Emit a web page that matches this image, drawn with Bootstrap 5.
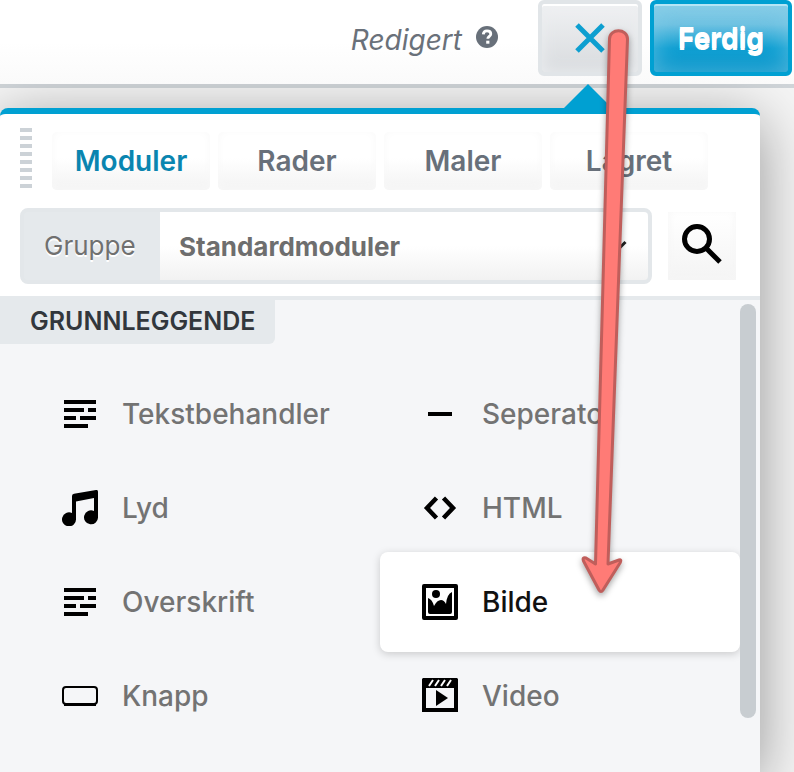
<!DOCTYPE html>
<html lang="nb">
<head>
<meta charset="utf-8">
<meta name="viewport" content="width=device-width, initial-scale=1">
<title>Moduler</title>
<link href="https://cdn.jsdelivr.net/npm/bootstrap@5.3.0/dist/css/bootstrap.min.css" rel="stylesheet">
<style>
  body { font-family: Inter, "Liberation Sans", sans-serif; font-size: 28px; line-height: 36px; color: #6a717a; background: #f5f5f5; }
  .topbar { height: 88px; padding-right: 2px; border-bottom: 4px solid #d0d5d9; background: linear-gradient(#fff 50%, #fafafa); }
  .state { font-size: 28px; margin-right: 14px; }
  .help { margin: 0 40px 6px 0; line-height: 0; }
  .tool { height: 76px; border: 4px solid #e1e5e8; border-radius: 6px; }
  .status { height: 80px; }
  .close-btn { width: 104px; background: linear-gradient(#f0f1f3, #d8dbde); box-shadow: inset 0 2px 0 #fff, inset 0 0 16px #eceef0; }
  .done { width: 142px; border-color: #00a0d2; color: #fff; font-weight: 700; font-size: 28px; background: linear-gradient(#86cce6, #6fc2e2 30%, #0f9fd2 65%, #0091c8); box-shadow: inset 0 2px 0 #b5e5f5, inset 0 0 24px rgba(140,210,235,.6); text-shadow: 0 2px 0 #fff; }
  .stage { padding: 20px 34px 0 0; clip-path: inset(-4px 0 0 0); }
  .panel { border-top: 6px solid #00a0d2; border-radius: 8px 8px 0 0; background: #f5f6f8; box-shadow: 0 12px 60px rgba(0,0,0,.4); }
  .pointer { position: absolute; top: -30px; right: 148px; border: 24px solid transparent; border-top: 0; border-bottom-color: #00a0d2; }
  .head { padding: 14px 20px 12px; border-bottom: 4px solid #e5e9ec; background: #fff; border-radius: 6px 6px 0 0; }
  .tabs { padding-right: 32px; }
  .grip { width: 12px; height: 60px; margin-right: 12px; background: repeating-linear-gradient(#ccd2d7 0 4px, transparent 4px 8px); }
  .tab-btn { flex: 1 1 0; height: 58px; border: 0; border-radius: 5px; font-size: 28px; font-weight: 600; color: #68707a; background: linear-gradient(#fff 45%, #f3f3f3); box-shadow: inset 0 -2px 10px #f8f8f8; }
  .tab-btn.current { color: #0a85b0; }
  .group-row { margin: 18px 4px 0 0; gap: 16px; }
  .group-box { height: 76px; border: 4px solid #e3e7ea; border-radius: 8px; background: #e5e9ec; }
  .group-label { width: 136px; padding-left: 20px; font-size: 26px; font-weight: 400; color: #707070; text-shadow: 0 2px 0 #fff; }
  .group-pick { flex: 1 1 0; min-width: 0; height: 68px; padding: 0 48px 0 19px; border: 0; border-radius: 0 4px 4px 0; font-size: 26px; font-weight: 700; color: #6e6e6e; background-color: #fff; background-image: url("data:image/svg+xml,%3Csvg xmlns='http://www.w3.org/2000/svg' viewBox='0 0 18 12'%3E%3Cpath d='M1.500 2L9 9.500 16.500 2' fill='none' stroke='%23222' stroke-width='3'/%3E%3C/svg%3E"), linear-gradient(#fff 50%, #f2f2f2); background-position: right 21px center, 0 0; background-size: 18px 12px, 100% 100%; }
  .find { width: 68px; height: 68px; border: 0; color: #000; background: linear-gradient(#fff, #f4f4f4); box-shadow: inset 0 -2px 10px #f6f6f6; line-height: 0; }
  .find svg { margin-bottom: 4px; }
  .list { min-height: 472px; }
  .section-name { display: inline-block; margin: -4px 0 0; padding: 7px 20px 5px 30px; font-size: 25px; line-height: 36px; font-weight: 600; color: #32373c; background: #e5e9ec; border-radius: 0 0 6px 0; }
  .modules { margin: 20px 20px 0; padding: 3px 0; }
  .module { height: 100px; margin: -3px 0; padding: 0 0 0 42px; gap: 24px; border: 0; border-radius: 8px; font-size: 28px; font-weight: 500; color: #737373; background: none; }
  .module svg { flex: none; color: #000; }
  .module.chosen { color: #111; background: #fff; box-shadow: 0 2px 8px rgba(0,0,0,.18); }
  .scroll-thumb { position: absolute; top: 4px; right: 4px; width: 16px; height: 414px; border-radius: 8px; background: #c8cdd1; }
  .arrow { position: absolute; top: 26px; right: 158px; pointer-events: none; filter: drop-shadow(0 3px 3px rgba(0,0,0,.35)); }
</style>
<script src="https://cdn.jsdelivr.net/npm/bootstrap@5.3.0/dist/js/bootstrap.bundle.min.js" defer></script>
</head>
<body class="position-relative">
<header class="topbar d-flex justify-content-end align-items-start">
  <div class="d-flex align-items-center status">
    <em class="state">Redigert</em>
    <a href="#" class="help" aria-label="Hjelp"><svg width="22" height="22" viewBox="0 0 22 22"><circle cx="11" cy="11" r="11" fill="#68707a"/><path d="M7.300 8.300C7.500 5.800 9 4.900 11 4.900c2.300 0 3.800 1.200 3.800 3 0 2.500-3 2.500-3 4.900" fill="none" stroke="#fff" stroke-width="2.800"/><path d="M10.200 14.700h3.200v3h-3.200z" fill="#fff"/></svg></a>
  </div>
  <div class="d-flex gap-2">
    <button type="button" class="tool close-btn p-0" aria-label="Lukk"><svg class="d-block mx-auto" width="30" height="30" viewBox="0 0 30 30"><path d="M2 2l26 26M28 2L2 28" stroke="#0d9fd0" stroke-width="5"/></svg></button>
    <button type="button" class="tool done p-0">Ferdig</button>
  </div>
</header>
<main class="stage">
  <section class="panel position-relative">
    <div class="pointer"></div>
    <div class="head">
      <nav class="tabs d-flex gap-2">
        <div class="grip"></div>
        <button type="button" class="tab-btn current mt-1 p-0">Moduler</button>
        <button type="button" class="tab-btn mt-1 p-0">Rader</button>
        <button type="button" class="tab-btn mt-1 p-0">Maler</button>
        <button type="button" class="tab-btn mt-1 p-0">Lagret</button>
      </nav>
      <div class="group-row d-flex align-items-center">
        <div class="group-box d-flex flex-grow-1 align-items-center">
          <label class="group-label" for="group">Gruppe</label>
          <select id="group" class="form-select group-pick"><option>Standardmoduler</option></select>
        </div>
        <button type="button" class="find p-0" aria-label="Søk"><svg width="42" height="42" viewBox="0 0 42 42" fill="none" stroke="#000"><circle cx="16" cy="16" r="12.500" stroke-width="5"/><path d="M25 25l14 14" stroke-width="5"/></svg></button>
      </div>
    </div>
    <div class="list position-relative">
      <h2 class="section-name">GRUNNLEGGENDE</h2>
      <div class="modules row row-cols-2 g-0">
        <div class="col"><button type="button" class="module w-100 d-flex align-items-center"><svg width="36" height="36" viewBox="0 0 36 36"><path d="M2 4h32v4H2zM2 12h20v4H2zM26 12h8v4h-8zM2 20h12v4H2zM18 20h16v4H18zM2 28h24v4H2z"/></svg>Tekstbehandler</button></div>
        <div class="col"><button type="button" class="module w-100 d-flex align-items-center"><svg width="36" height="36" viewBox="0 0 36 36"><path d="M6 16h24v4H6z"/></svg>Seperator</button></div>
        <div class="col"><button type="button" class="module w-100 d-flex align-items-center"><svg width="36" height="36" viewBox="0 0 36 36"><path d="M10 6Q10 4 12 3.700L34 0q2-.3 2 1.700V27a7 7 0 1 1-4-6V8L14 11.500V29a7 7 0 1 1-4-6z"/></svg>Lyd</button></div>
        <div class="col"><button type="button" class="module w-100 d-flex align-items-center"><svg width="36" height="36" viewBox="0 0 36 36"><path d="M14.500 8L5 18l9.500 10M21.500 8L31 18l-9.500 10" fill="none" stroke="#000" stroke-width="4.500"/></svg>HTML</button></div>
        <div class="col"><button type="button" class="module w-100 d-flex align-items-center"><svg width="36" height="36" viewBox="0 0 36 36"><path d="M2 4h32v4H2zM2 12h20v4H2zM26 12h8v4h-8zM2 20h12v4H2zM18 20h16v4H18zM2 28h24v4H2z"/></svg>Overskrift</button></div>
        <div class="col"><button type="button" class="module chosen w-100 d-flex align-items-center"><svg width="36" height="36" viewBox="0 0 36 36"><path d="M2 0h32a2 2 0 0 1 2 2v32a2 2 0 0 1-2 2H2a2 2 0 0 1-2-2V2a2 2 0 0 1 2-2zM4 4v28h28V4z" fill-rule="evenodd"/><circle cx="14" cy="10" r="4"/><path d="M6 14q4 1 6 8 3-6 7-6 3 0 5 4 1-10 6-12v20q0 2-2 2H8q-2 0-2-2z"/></svg>Bilde</button></div>
        <div class="col"><button type="button" class="module w-100 d-flex align-items-center"><svg width="36" height="36" viewBox="0 0 36 36" fill="none" stroke="#000"><rect x="1" y="9" width="34" height="17" rx="3" stroke-width="2"/><path d="M2 26.500h32" stroke-width="3"/></svg>Knapp</button></div>
        <div class="col"><button type="button" class="module w-100 d-flex align-items-center"><svg width="36" height="36" viewBox="0 0 36 36"><path d="M1 0h34l1 1v33H0V1zM4 10v20h28V10z" fill-rule="evenodd"/><path d="M14 12l12 8-12 8z"/><path d="M7 8l4-6M13 8l4-6M19 8l4-6M25 8l4-6" stroke="#fff" stroke-width="2"/></svg>Video</button></div>
      </div>
      <div class="scroll-thumb"></div>
    </div>
  </section>
</main>
<svg class="arrow" width="56" height="568" viewBox="580 26 56 568" fill="#ff7b76" stroke="#c05e5b" stroke-width="3" stroke-linejoin="round"><path d="M609.500 39C609.500 28 627.500 28 627.500 39L608 564 619 560Q622 559 620 563L603 590Q601 593 599 590L583.500 561Q582 557 586 558L595.500 564z"/></svg>
</body>
</html>
